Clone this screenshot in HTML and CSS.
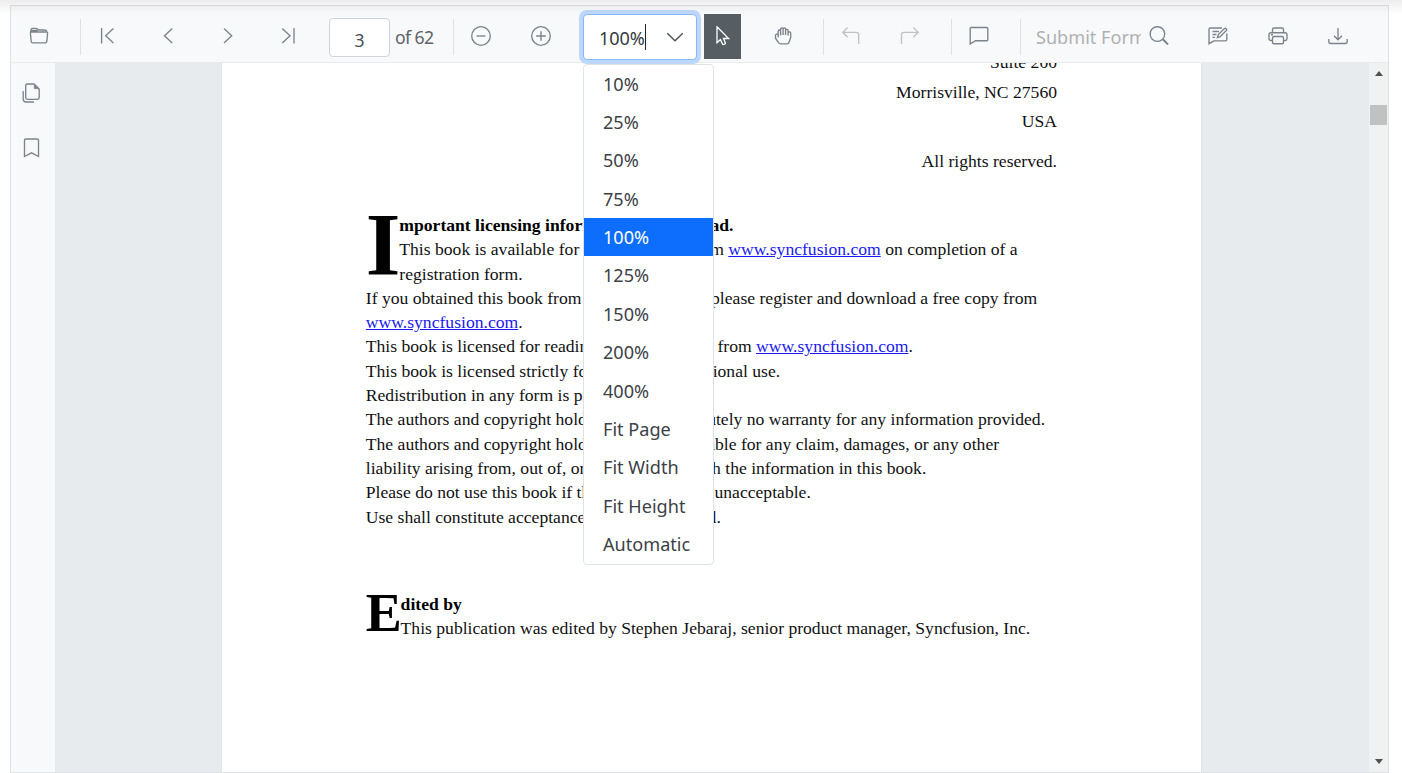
FILE: index.html
```html
<!DOCTYPE html>
<html lang="en">
<head>
<meta charset="utf-8">
<title>PDF Viewer</title>
<link rel="stylesheet" href="styles.css">
</head>
<body>
<div class="viewer">
  <header class="toolbar">
    <button class="btn open"><svg viewBox="0 0 20 20"><path d="M1.5 7 2 3.6Q2.2 2.5 3.4 2.5H7Q7.8 2.5 8.5 3.3T10 4H16Q17.6 4 17.8 6M2.3 4.7H8.5M2.5 6H17.5Q18.8 6 18.6 7.3L17.8 15.5Q17.6 16.8 16.4 16.8H3.6Q2.4 16.8 2.2 15.5L1.4 7.3Q1.3 6 2.5 6Z"/></svg></button>
    <span class="sep s1"></span>
    <div class="nav">
      <button class="btn"><svg viewBox="0 0 20 20"><path d="M3.6 2V17.6M15.4 2.6 7.7 9.8 15.4 17"/></svg></button>
      <button class="btn"><svg viewBox="0 0 20 20"><path d="M14.2 2.6 6.5 9.8 14.2 17"/></svg></button>
      <button class="btn"><svg viewBox="0 0 20 20"><path d="M6 2.6 13.7 9.8 6 17"/></svg></button>
      <button class="btn"><svg viewBox="0 0 20 20"><path d="M4.3 2.6 12 9.8 4.3 17M16 2V17.6"/></svg></button>
    </div>
    <div class="page-no">3</div>
    <span class="total">of 62</span>
    <span class="sep"></span>
    <div class="zoomers">
      <button class="btn"><svg viewBox="0 0 20 20"><circle cx="10" cy="10" r="9.3"/><path d="M5.5 10H14.5"/></svg></button>
      <button class="btn"><svg viewBox="0 0 20 20"><circle cx="10" cy="10" r="9.3"/><path d="M5.2 10H14.8M10 5.2V14.8"/></svg></button>
    </div>
    <div class="combo">
      <span class="value">100%</span><span class="caret"></span>
      <svg class="chev" viewBox="0 0 18 10"><path d="M1.2 1.2 9 8.7 16.8 1.2"/></svg>
      <ul class="menu">
        <li>10%</li><li>25%</li><li>50%</li><li>75%</li><li class="on">100%</li><li>125%</li><li>150%</li><li>200%</li><li>400%</li><li>Fit Page</li><li>Fit Width</li><li>Fit Height</li><li>Automatic</li>
      </ul>
    </div>
    <button class="btn select"><svg viewBox="0 0 20 20"><path d="M4 .7V16.7L7.4 13.5 9.6 18.1Q10 18.8 10.8 18.5L12 17.9Q12.6 17.5 12.3 16.8L10.5 12.5H15.6Z"/></svg></button>
    <button class="btn hand"><svg viewBox="0 0 20 20"><path d="M5.2 11.5V5.3Q5.2 4 6.4 4T7.6 5.3V9.5M7.6 9V3.2Q7.6 2 8.9 2T10.1 3.2V9M10.1 4V3Q10.1 2 11.4 2T12.6 3.2V9M12.6 5V4.6Q12.6 3.4 13.9 3.4T15.1 4.6V9.5M15.1 7Q15.3 5.8 16.5 5.9 17.7 6 17.7 7.3V11.5L16 16.2Q15.7 17.8 14.3 17.8H7.5Q6.3 17.8 5.5 16.5L2.5 12.2V9.5Q2.5 8 4 8.2L5.2 8.6"/></svg></button>
    <span class="sep s2"></span>
    <div class="history">
      <button class="btn"><svg viewBox="0 0 20 20"><path d="M6.7 1.5 1.8 6.3 6.7 11.2M2 6.3H15.2Q17.7 6.3 17.7 8.8V18"/></svg></button>
      <button class="btn"><svg viewBox="0 0 20 20"><path d="M13.3 1.5 18.2 6.3 13.3 11.2M18 6.3H4Q1.5 6.3 1.5 8.8V18"/></svg></button>
    </div>
    <span class="sep s3"></span>
    <button class="btn note"><svg viewBox="0 0 20 20"><path d="M2.2 1.5H17.8Q18.8 1.5 18.8 2.5V13.7Q18.8 14.7 17.8 14.7H6.5L1.2 18V2.5Q1.2 1.5 2.2 1.5Z"/></svg></button>
    <span class="sep s2"></span>
    <span class="submit">Submit Form</span>
    <button class="btn search"><svg viewBox="0 0 20 20"><circle cx="8.4" cy="8" r="7.3"/><path class="thick" d="M13.8 13.3 19 18.4"/></svg></button>
    <div class="tail">
      <button class="btn"><svg viewBox="0 0 20 20"><path d="M14 2H2.2Q1 2 1 3.2V17.7L5.8 14.8H17.6Q18.8 14.8 18.8 13.6V7.5M4.5 5.5H11M4.5 8.5H8.5M4.5 11.4H7M9.4 11.6 10.4 8.6 16.4 2.6Q17.3 1.9 18.2 2.7T18.3 4.5L12.2 10.7Z"/></svg></button>
      <button class="btn"><svg viewBox="0 0 20 20"><path d="M4.5 6.5V3.5Q4.5 2 6 2H14Q15.5 2 15.5 3.5V6.5M4.5 14.5H2.8Q1 14.5 1 12.7V8.7Q1 6.7 3 6.7H17Q19 6.7 19 8.7V12.7Q19 14.5 17.2 14.5H15.5M6 10.5H14Q15.5 10.5 15.5 12V16.2Q15.5 17.7 14 17.7H6Q4.5 17.7 4.5 16.2V12Q4.5 10.5 6 10.5ZM3 8.7H5"/></svg></button>
      <button class="btn"><svg viewBox="0 0 20 20"><path d="M10 2V13.5M6 9.7 10 13.7 14 9.7M.8 13V15.5Q.8 17.5 2.8 17.5H17.2Q19.2 17.5 19.2 15.5V13"/></svg></button>
    </div>
  </header>
  <main class="body">
    <aside class="side">
      <svg viewBox="0 0 20 20"><path d="M5.3 1H12L17.2 6V14.5Q17.2 16.3 15.4 16.3H5.4Q3.7 16.3 3.7 14.5V2.6Q3.7 1 5.3 1ZM1.2 8V16Q1.2 19 4.2 19H12"/><path class="fold" d="M12.2 1.5V5.7H16.7Z"/></svg>
      <svg viewBox="0 0 20 20"><path d="M2.5 18.5V2.5Q2.5 1 4 1H15Q16.5 1 16.5 2.5V18.5L9.5 14.8Z"/></svg>
    </aside>
    <div class="canvas">
      <article class="sheet">
        <div class="address"><p>Suite 200</p><p>Morrisville, NC 27560</p><p>USA</p><p class="rights">All rights reserved.</p></div>
        <section class="licence">
          <div class="lead">
            <span class="cap cap-i">I</span>
            <div><p><b>mportant licensing information. Please read.</b></p>
            <p class="split"><span>This book is available for free download</span><span class="r1">from <a>www.syncfusion.com</a> on completion of a</span></p>
            <p>registration form.</p></div>
          </div>
          <p>If you obtained this book from any other source, please register and download a free copy from</p>
          <p><a>www.syncfusion.com</a>.</p>
          <p>This book is licensed for reading only if obtained from <a>www.syncfusion.com</a>.</p>
          <p>This book is licensed strictly for <span class="tight">personal or educat</span>ional use.</p>
          <p>Redistribution in any form is prohibited.</p>
          <p>The authors and copyright holders provide absolutely no warranty for any information provided.</p>
          <p>The authors and copyright holders shall not be liable for any claim, damages, or any other</p>
          <p>liability arising from, out of, or in connection with the information in this book.</p>
          <p>Please do not use this book if the listed terms are unacceptable.</p>
          <p>Use shall constitute acceptance of the terms listed.</p>
        </section>
        <section class="edited">
          <span class="cap cap-e">E</span>
          <div><p><b>dited by</b></p><p>This publication was edited by Stephen Jebaraj, senior product manager, Syncfusion, Inc.</p></div>
        </section>
      </article>
    </div>
    <div class="scroll"><i class="up"></i><i class="thumb"></i><i class="down"></i></div>
  </main>
</div>
<div class="shade"></div>
</body>
</html>
```
FILE: styles.css
```css
* { box-sizing: border-box; }
body { margin: 0; width: 1402px; height: 773px; overflow: hidden; background: #fff; padding: 5px 0 0 10px; }
p, ul { margin: 0; padding: 0; }
.shade { position: absolute; inset: 0 0 auto 0; height: 14px; background: linear-gradient(rgba(0,0,0,.075), rgba(0,0,0,.04) 45%, transparent); pointer-events: none; }
.viewer { width: 1379px; height: 768px; border: 1px solid #dee2e6; display: flex; flex-direction: column; }
.toolbar { height: 57px; flex: none; display: flex; align-items: center; padding-top: 5px; background: #f8f9fa; border-bottom: 1px solid #e9ecef; font: 18.1px "Noto Sans", sans-serif; color: #5c636a; }
.btn { border: 0; padding: 0; background: none; width: 52px; height: 45px; flex: none; display: flex; align-items: center; justify-content: center; }
svg { fill: none; stroke: #7b838b; stroke-width: 1.35; flex: none; }
.btn svg { width: 20px; height: 20px; margin-bottom: 2px; }
.open { width: 56px; }
.sep { width: 1px; height: 36px; background: #dee2e6; flex: none; }
.s1 { margin-left: 13px; }
.s2 { margin-left: 14px; }
.s3 { margin-left: 15px; }
.nav { display: flex; gap: 8px; padding-left: .5px; }
.page-no { margin: 1px 0 0 15.5px; width: 61px; height: 39px; flex: none; border: 1px solid #ced4da; border-radius: 4px; background: #fff; color: #495057; text-align: center; line-height: 42px; }
.total { width: 63px; flex: none; padding: 1px 0 0 5px; white-space: nowrap; font-size: 17.6px; letter-spacing: -.6px; }
.zoomers { display: flex; gap: 6px; }
.zoomers .btn { width: 54px; }
.combo { position: relative; margin-left: 15px; width: 114px; height: 46px; flex: none; display: flex; align-items: center; border: 1px solid #86b7fe; border-radius: 4px; background: #fff; box-shadow: 0 0 0 4px #bdd7fb; padding-left: 15px; color: #343a40; }
.value { padding-top: 2px; letter-spacing: -.1px; }
.caret { width: 1px; height: 26px; background: #212529; }
.chev { width: 18px; height: 10px; margin-left: auto; margin-right: 12px; stroke: #495057; }
.menu { position: absolute; z-index: 2; left: -1px; top: 49px; width: 131px; height: 501px; border: 1px solid #dee2e6; border-radius: 4px; background: #fff; list-style: none; color: #3c4146; }
.menu li { height: 38.4px; line-height: 39px; padding-left: 19px; white-space: nowrap; }
.menu .on { background: #0d6efd; color: #fff; }
.select { margin-left: 7px; width: 37px; background: #565e64; }
.select svg { stroke: #fff; stroke-width: 1.3; }
.hand { margin-left: 16px; }
.hand svg { margin-right: 1px; }
.history { display: flex; gap: 6px; }
.history .btn:first-child { width: 54px; }
.history svg { stroke: #bfc3c6; }
.note { width: 54px; }
.submit { margin-left: 15px; width: 105px; flex: none; overflow: hidden; white-space: nowrap; color: #aeb1b3; }
.search { width: 35px; }
.thick { stroke-width: 2; }
.tail { display: flex; gap: 8px; margin-left: 16px; }
.body { flex: 1; min-height: 0; display: flex; }
.side { width: 44px; flex: none; background: #f8f9fa; display: flex; flex-direction: column; align-items: center; padding-top: 20px; gap: 35px; }
.side svg { width: 20px; height: 20px; margin-right: 2px; }
.side .fold { fill: #7b838b; stroke-width: .6; }
.canvas { flex: 1; background: #e8ebed; padding-left: 166px; overflow: hidden; }
.sheet { width: 981px; height: 712px; overflow: hidden; background: #fff; border: solid #e2e5e8; border-width: 0 1px; font: 17.61px/24.32px "Liberation Serif", serif; color: #111; white-space: nowrap; padding: 0 144px 0 143.8px; }
.address { text-align: right; line-height: 29.7px; margin-top: -15px; }
.address .rights { margin-top: 9.5px; }
.licence { margin-top: 36.6px; }
.lead, .edited { display: flex; }
.cap { flex: none; font-weight: bold; color: #000; }
.cap-i { width: 33.5px; font-size: 89px; line-height: 62px; height: 62px; }
.cap-e { width: 34.8px; font-size: 54px; line-height: 43px; }
.split { display: flex; margin-top: -.4px; margin-bottom: .4px; }
.split .r1 { margin-left: 4.8px; }
.tight { letter-spacing: -.78px; }
.licence b, .edited b { color: #000; }
.edited { margin-top: 62.6px; }
a { color: #1a1aee; text-decoration: underline; }
.scroll { width: 19px; flex: none; background: #f1f1f1; display: flex; flex-direction: column; align-items: center; padding: 8px 0 8px; }
.up, .down { border: 4.5px solid transparent; border-width: 0 4.5px 5px; border-bottom-color: #505050; }
.down { border-width: 5px 4.5px 0; border-top-color: #505050; margin-top: auto; }
.thumb { width: 17px; height: 20px; background: #c1c1c1; margin-top: 29px; }
```
